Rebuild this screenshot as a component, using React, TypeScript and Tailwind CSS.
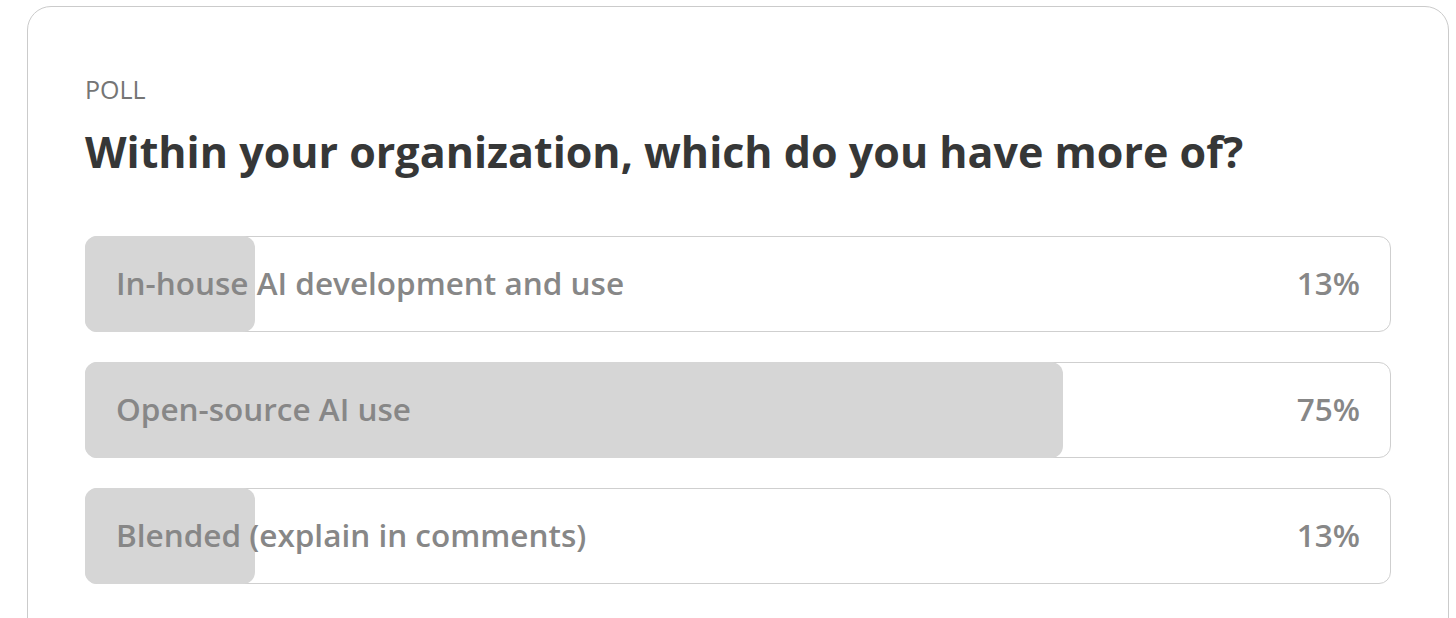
import React from 'react';

type Option = { label: string; pct: number };

const options: Option[] = [
  { label: 'In-house AI development and use', pct: 13 },
  { label: 'Open-source AI use', pct: 75 },
  { label: 'Blended (explain in comments)', pct: 13 },
];

const PollOption: React.FC<{ option: Option }> = ({ option }) => (
  <div className="relative h-[96px] rounded-[12px] border border-[#cfcfcf] bg-white">
    <div
      className="absolute -left-px -top-px -bottom-px rounded-[12px] bg-[#d6d6d6]"
      style={{ width: `${option.pct}%` }}
    />
    <div className="relative flex h-full items-center justify-between px-[30px] pb-[3px] text-[31.5px] font-semibold text-[#878787]">
      <span>{option.label}</span>
      <span>{option.pct}%</span>
    </div>
  </div>
);

export default function App() {
  return (
    <div
      className="h-[618px] overflow-hidden bg-white pl-[27px] pr-[7px] pt-[6px]"
      style={{ fontFamily: '"Open Sans", "Noto Sans", sans-serif' }}
    >
      <div className="h-[700px] rounded-[24px] border border-[#cbcbcb] px-[57px] pt-[66px]">
        <div className="text-[25px] font-medium leading-[32px] text-[#757575]">POLL</div>
        <h1 className="mt-[19px] text-[43px] font-bold leading-[56px] text-[#363737]">
          Within your organization, which do you have more of?
        </h1>
        <div className="mt-[56px] flex flex-col gap-[30px]">
          {options.map((o) => (
            <PollOption key={o.label} option={o} />
          ))}
        </div>
      </div>
    </div>
  );
}
